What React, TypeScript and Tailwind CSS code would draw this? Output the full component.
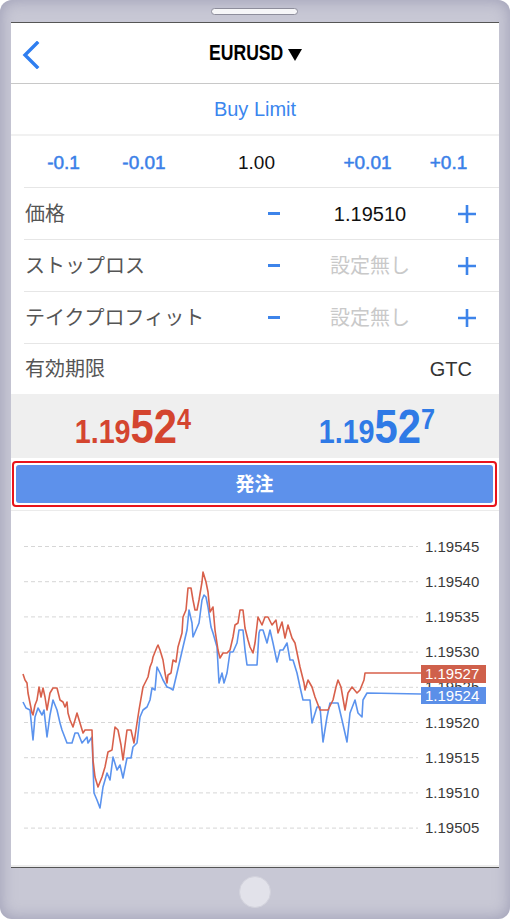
import React from "react";

const RED: number[][] = [[23,674],[25,680],[27,683],[28,693],[30,703],[32,713],[33,715],[35,705],[37,700],[39,687],[41,697],[43,688],[45,697],[47,710],[50,693],[53,688],[57,688],[60,700],[63,702],[65,707],[67,702],[68,713],[70,720],[73,727],[77,713],[80,723],[83,733],[85,730],[92,730],[93,760],[95,777],[98,787],[102,777],[105,767],[108,752],[112,750],[115,727],[118,730],[121,745],[123,760],[127,730],[131,730],[134,743],[137,723],[139,710],[143,687],[145,683],[148,677],[150,667],[152,662],[153,657],[157,647],[158,645],[160,650],[163,660],[165,673],[167,683],[168,675],[171,673],[173,660],[176,662],[178,647],[182,633],[183,617],[186,610],[188,588],[191,588],[193,600],[195,610],[197,610],[199,600],[202,582],[203,572],[206,582],[208,592],[210,612],[213,607],[215,630],[218,650],[220,658],[223,653],[227,653],[230,650],[233,637],[235,625],[238,623],[240,610],[243,610],[245,628],[248,640],[250,647],[253,653],[255,643],[258,617],[262,625],[265,617],[268,617],[272,625],[276,620],[278,633],[282,622],[285,638],[288,625],[292,638],[295,643],[300,667],[304,683],[305,690],[308,680],[312,687],[315,697],[320,710],[328,710],[333,700],[336,687],[338,680],[341,687],[345,710],[348,693],[352,687],[357,693],[360,690],[364,680],[365,673],[421,673]];

const BLUE: number[][] = [[23,702],[26,708],[30,710],[33,740],[35,717],[38,708],[42,715],[44,710],[47,737],[50,715],[53,700],[57,710],[60,723],[62,730],[67,743],[72,743],[75,733],[78,733],[82,743],[87,737],[88,743],[92,737],[94,793],[97,800],[100,808],[103,787],[107,773],[110,780],[113,757],[117,770],[120,765],[123,778],[127,758],[131,758],[133,747],[137,743],[140,717],[143,710],[147,707],[150,700],[152,688],[155,690],[157,667],[160,673],[163,680],[167,687],[170,688],[173,690],[177,673],[180,660],[183,647],[187,630],[189,610],[192,623],[193,637],[196,630],[199,623],[202,600],[204,595],[206,597],[208,607],[211,627],[213,633],[217,647],[219,683],[222,673],[224,683],[227,673],[230,652],[233,652],[237,643],[239,630],[243,630],[245,650],[247,665],[257,665],[259,633],[260,630],[263,630],[267,643],[270,630],[273,643],[277,662],[280,650],[283,650],[287,643],[290,660],[293,660],[297,673],[300,687],[303,700],[310,700],[312,723],[317,707],[320,707],[323,742],[327,717],[330,703],[338,703],[342,720],[347,742],[350,713],[355,700],[358,713],[362,717],[363,700],[367,693],[421,694]];

const LABELS = ["1.19545","1.19540","1.19535","1.19530","1.19525","1.19520","1.19515","1.19510","1.19505"];

function Minus() {
  return (
    <div className="w-[40px] flex justify-center">
      <div className="w-[12px] h-[3px] bg-[#3d84ea]" />
    </div>
  );
}

function Plus() {
  return (
    <div className="w-[42px] flex justify-center">
      <svg width="20" height="20" viewBox="0 0 20 20">
        <path d="M10 1 V19 M1 10 H19" stroke="#3d84ea" strokeWidth="2.6" />
      </svg>
    </div>
  );
}

function Row({ label, value, muted }: { label: string; value: string; muted?: boolean }) {
  return (
    <div className="h-[51px] flex items-center pl-[14px] pr-[11px]">
      <div className="flex-1 text-[20px] text-[#555] leading-none">{label}</div>
      <Minus />
      <div className={"w-[152px] text-center text-[20px] leading-none " + (muted ? "text-[#c9c9c9]" : "text-[#111]")}>{value}</div>
      <Plus />
    </div>
  );
}

function Divider() {
  return <div className="h-px ml-[13px] bg-[#e6e6e6]" />;
}

function Price({ a, b, c, color }: { a: string; b: string; c: string; color: string }) {
  return (
    <div className="flex items-center justify-center">
      <span className={"inline-block scale-x-[0.87] font-bold whitespace-nowrap leading-none " + color}>
        <span className="text-[33px]">{a}</span>
        <span className="text-[48px]">{b}</span>
        <span className="text-[29px] align-[14px]">{c}</span>
      </span>
    </div>
  );
}

export default function App() {
  const gridYs = LABELS.map((_, i) => 546.5 + 35.2 * i);
  const pts = (arr: number[][]) => arr.map((p) => p.join(",")).join(" ");
  const lot = "flex-none text-center text-[#3a80e8] [-webkit-text-stroke:0.5px_#3a80e8]";
  return (
    <div className="w-[510px] h-[919px] bg-white font-['Liberation_Sans','Noto_Sans_CJK_JP',sans-serif]">
      <div className="relative w-[510px] h-[919px] rounded-[12px] bg-[#c8c8d5] shadow-[inset_0_0_16px_rgba(140,140,168,0.75)] pt-[22px] px-[11px] pb-[51px] flex flex-col">
        <div className="absolute left-[211px] top-[8px] w-[87px] h-[7px] rounded-full bg-[#f6f6f8] border border-[#8e8e9c]" />
        <div className="absolute left-[239px] top-[876px] w-[32px] h-[32px] rounded-full bg-[#e2e2ea] border border-[#d2d2dc]" />

        <div className="flex flex-col h-full bg-white border-t border-b border-[#555]">
          {/* header */}
          <div className="h-[61px] grid grid-cols-[1fr_auto_1fr] items-center pt-[3px] border-b border-[#c8c8c8]">
            <div className="pl-[11px] flex items-center">
              <svg width="18" height="28" viewBox="0 0 18 28">
                <polyline points="15,2 3,14 15,26" fill="none" stroke="#2f7ef0" strokeWidth="3.4" strokeLinecap="square" />
              </svg>
            </div>
            <div className="flex items-center gap-[2px] pl-[2px]">
              <div className="w-[76px]">
                <span className="inline-block origin-left scale-x-[0.8] text-[22px] font-bold text-black leading-none whitespace-nowrap">EURUSD</span>
              </div>
              <svg width="16" height="14" viewBox="0 0 16 14">
                <polygon points="1,1 15,1 8,13" fill="#000" />
              </svg>
            </div>
            <div />
          </div>

          {/* Buy Limit */}
          <div className="h-[50px] flex items-center justify-center text-[20px] text-[#3a86ee]">Buy Limit</div>
          <div className="h-[2px] bg-[#f1f1f1]" />

          {/* lots */}
          <div className="h-[51px] flex items-center overflow-hidden text-[19px] leading-none pt-[1px]">
            <div className={"w-[105px] " + lot}>-0.1</div>
            <div className={"w-[56px] " + lot}>-0.01</div>
            <div className="w-[169px] flex-none text-center text-[#111]">1.00</div>
            <div className={"w-[53px] " + lot}>+0.01</div>
            <div className={"w-[109px] " + lot}>+0.1</div>
          </div>
          <Divider />
          <Row label="価格" value="1.19510" />
          <Divider />
          <Row label="ストップロス" value="設定無し" muted />
          <Divider />
          <Row label="テイクプロフィット" value="設定無し" muted />
          <Divider />
          <div className="h-[50px] flex items-center justify-between pl-[14px] pr-[27px] text-[20px] leading-none">
            <span className="text-[#555]">有効期限</span>
            <span className="text-[#333]">GTC</span>
          </div>

          {/* prices */}
          <div className="h-[64px] bg-[#efefef] grid grid-cols-2 pt-[2px]">
            <Price a="1.19" b="52" c="4" color="text-[#d4452f]" />
            <Price a="1.19" b="52" c="7" color="text-[#2f7ae6]" />
          </div>

          {/* button */}
          <div className="h-[52px] pt-[3px] pb-[3px] pl-[1px] pr-[2px]">
            <div className="h-full rounded-[4px] border-2 border-[#e8141c] p-[2px] bg-white">
              <div className="h-full rounded-[3px] bg-[#5d91eb] flex items-center justify-center text-white font-bold text-[19px] leading-none">発注</div>
            </div>
          </div>
          <div className="h-px bg-[#ebebeb]" />

          {/* chart */}
          <div className="relative flex-1">
            <svg className="absolute inset-0" width="488" height="354" viewBox="11 511 488 354">
              {gridYs.map((y, i) => (
                <line key={i} x1="24" x2="418" y1={y} y2={y} stroke="#d6d6d6" strokeWidth="1" strokeDasharray="4 3" />
              ))}
              <polyline points={pts(BLUE)} fill="none" stroke="#5b93ee" strokeWidth="1.6" strokeLinejoin="round" />
              <polyline points={pts(RED)} fill="none" stroke="#d8604b" strokeWidth="1.6" strokeLinejoin="round" />
            </svg>
            {LABELS.map((l, i) => (
              <div
                key={l}
                className="absolute left-[414px] text-[15px] leading-[18px] text-[#3a3a3a]"
                style={{ top: gridYs[i] - 511 - 9 }}
              >
                {l}
              </div>
            ))}
            <div className="absolute left-[410px] top-[154px] w-[65px] h-[18px] bg-[#cf604b] text-white text-[15px] leading-[18px] pl-[4px]">1.19527</div>
            <div className="absolute left-[410px] top-[176px] w-[65px] h-[17px] bg-[#5b8fe8] text-white text-[15px] leading-[17px] pl-[4px]">1.19524</div>
          </div>
          <div className="h-[2px] bg-[#ececec]" />
        </div>
      </div>
    </div>
  );
}
